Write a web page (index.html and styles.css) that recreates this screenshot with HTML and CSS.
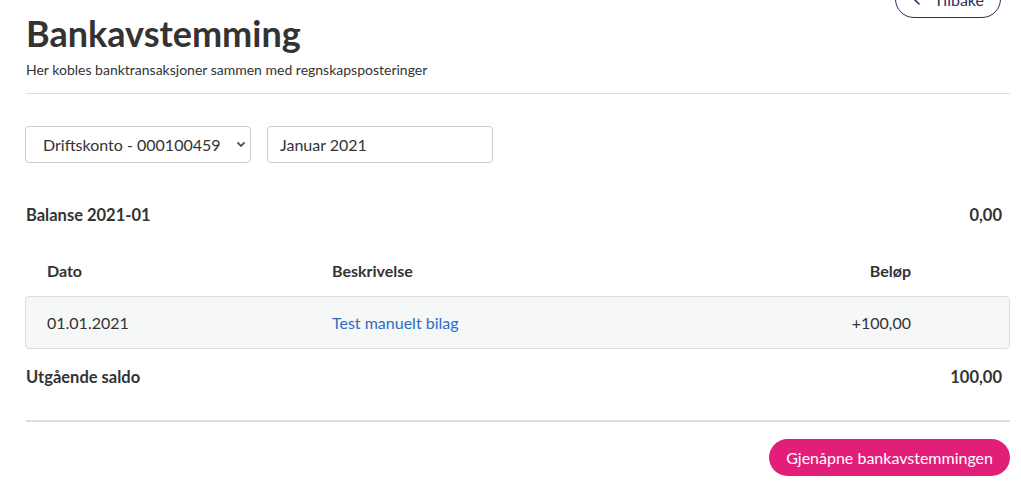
FILE: index.html
```html
<!DOCTYPE html>
<html lang="no">
<head>
	<meta charset="UTF-8">
	<meta name="viewport" content="width=device-width, initial-scale=1.0">
	<title>Bankavstemming</title>
	<link rel="stylesheet" href="styles.css">
</head>
<body>
<div class="page">
	<!-- topp -->
	<header class="page-header">
		<div>
			<h1>Bankavstemming</h1>
			<p class="lead">Her kobles banktransaksjoner sammen med regnskapsposteringer</p>
		</div>
		<a href="#" class="btn-back">
			<svg width="14" height="14" viewBox="0 0 14 14"><path d="M9 2 L4 7 L9 12" fill="none" stroke="currentColor" stroke-width="1.6" stroke-linecap="round" stroke-linejoin="round"/></svg>
			Tilbake
		</a>
	</header>

	<!-- filtre -->
	<div class="filters">
		<div class="select-wrap">
			<select class="field">
				<option>Driftskonto - 000100459</option>
			</select>
			<svg class="select-arrow" width="10" height="7" viewBox="0 0 10 7"><path d="M1.5 1.5 L5 5 L8.5 1.5" fill="none" stroke="#555" stroke-width="1.8"/></svg>
		</div>
		<input class="field" type="text" value="Januar 2021">
	</div>

	<div class="sum-row">
		<span>Balanse 2021-01</span>
		<span>0,00</span>
	</div>

	<div class="tx-head">
		<span>Dato</span>
		<span>Beskrivelse</span>
		<span class="amount">Beløp</span>
	</div>
	<div class="tx-row">
		<span>01.01.2021</span>
		<a href="#" class="tx-link">Test manuelt bilag</a>
		<span class="amount">+100,00</span>
	</div>

	<div class="sum-row">
		<span>Utgående saldo</span>
		<span>100,00</span>
	</div>

	<div class="actions">
		<button class="btn-primary">Gjenåpne bankavstemmingen</button>
	</div>
</div>
</body>
</html>
```

FILE: styles.css
```css
* {
    margin: 0;
    padding: 0;
    box-sizing: border-box;
}

body {
    font-family: 'Lato', 'Noto Sans', sans-serif;
    color: #333;
    background: #fff;
    overflow: hidden;
}

.page {
    padding: 11px 11px 0 26px;
}

.page-header {
    display: flex;
    justify-content: space-between;
    align-items: flex-start;
    padding-bottom: 13px;
    border-bottom: 1px solid #ddd;
}

h1 {
    font-size: 36px;
    font-weight: 700;
    line-height: 44px;
    color: #333;
}

.lead {
    font-size: 14px;
    line-height: 20px;
    margin-top: 5px;
}

.btn-back {
    display: flex;
    align-items: center;
    gap: 10px;
    height: 38px;
    margin-top: -31px;
    margin-right: 9px;
    padding: 0 16px 0 14px;
    border: 1px solid #2d2e5f;
    border-radius: 19px;
    color: #2d2e5f;
    text-decoration: none;
    font-size: 16px;
}

.filters {
    display: flex;
    gap: 16px;
    margin-top: 32px;
    margin-left: -1px;
}

.select-wrap {
    position: relative;
}

.field {
    display: block;
    width: 226px;
    height: 37px;
    padding: 0 12px;
    border: 1px solid #ccc;
    border-radius: 4px;
    background: #fff;
    font-family: inherit;
    font-size: 16px;
    color: #333;
    outline: none;
}

select.field {
    -webkit-appearance: none;
    appearance: none;
    padding-left: 17px;
}

.select-arrow {
    position: absolute;
    right: 5px;
    top: 15px;
}

.sum-row {
    display: flex;
    justify-content: space-between;
    font-size: 16.5px;
    font-weight: 700;
    line-height: 20px;
    padding-right: 8px;
}

.filters + .sum-row {
    margin-top: 42px;
}

.tx-head,
.tx-row {
    display: grid;
    grid-template-columns: 285px 1fr 120px;
    align-items: center;
    margin-left: -1px;
    padding: 0 98px 0 21px;
    font-size: 16px;
    border: 1px solid transparent;
    border-radius: 4px;
}

.tx-head {
    height: 52px;
    margin-top: 19px;
    font-weight: 700;
}

.tx-row {
    height: 53px;
    background: #f6f7f7;
    border-color: #ddd;
}

.amount {
    text-align: right;
}

.tx-link {
    color: #2f6cc3;
    text-decoration: none;
}

.tx-row + .sum-row {
    margin-top: 18px;
}

.actions {
    display: flex;
    justify-content: flex-end;
    margin-top: 33px;
    padding-top: 17px;
    border-top: 2px solid #dcdce0;
}

.btn-primary {
    height: 37px;
    padding: 0 17px;
    border: none;
    border-radius: 19px;
    background: #e31e79;
    color: #fff;
    font-family: inherit;
    font-size: 16px;
}
```
